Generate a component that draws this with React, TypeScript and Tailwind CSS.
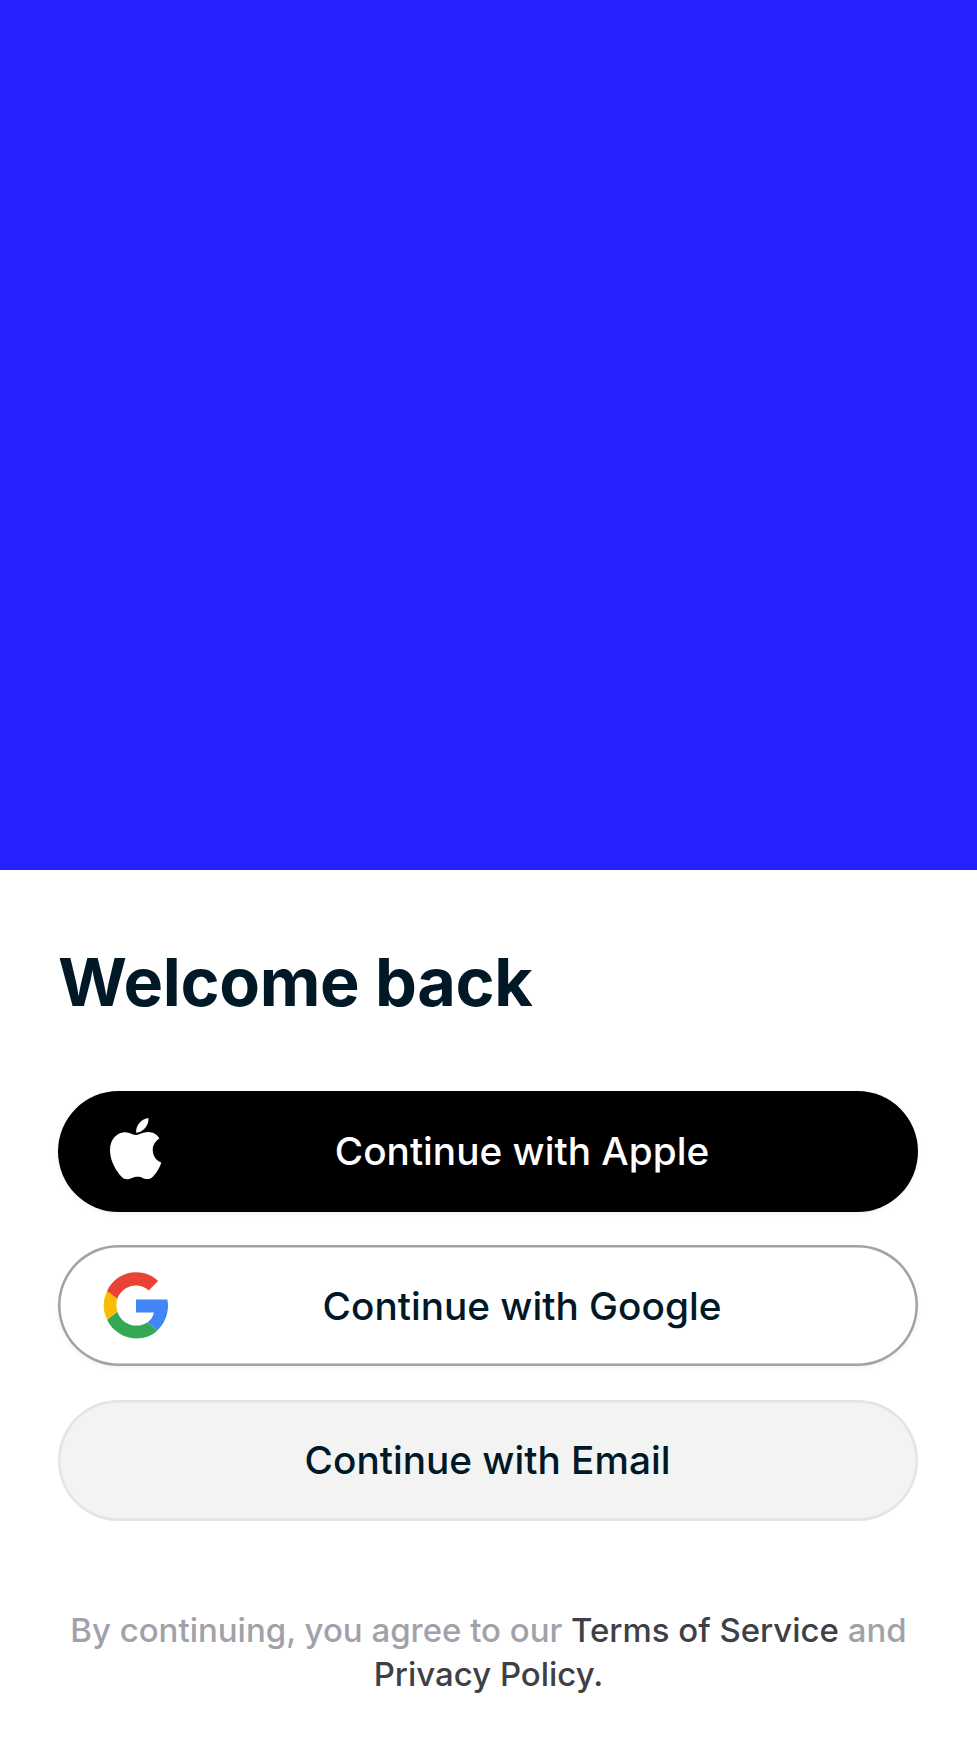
import type { ReactNode } from "react";

function AppleLogo() {
  return (
    <svg className="mb-[5px] h-[61.5px] w-[52px]" viewBox="0 0 52 61.5" fill="#fff" aria-hidden="true">
      <path d="M38.400 0C38.900 3.700 37.300 7.400 35.100 10.100C32.800 12.900 29.500 14.900 26.200 14.700C25.700 11.100 27.300 7.500 29.400 5C31.700 2.200 35.600 .2 38.400 0Z" />
      <path d="M49.400 20.400C49.100 20.600 42.700 24.200 42.700 32C42.700 41.100 50.700 44.400 51.300 44.600C51.200 44.900 50 49.100 47 53.500C44.400 57.300 41.700 61.100 37.500 61.100C33.300 61.100 32.300 58.700 27.400 58.700C22.700 58.700 21 61.200 17 61.200C13.100 61.200 10.300 57.700 7.200 53.200C3.500 48 0 39.900 0 32.200C0 20 8 14.200 15.300 14.200C19.700 14.200 23.400 17.100 26.200 17.100C28.800 17.100 32.900 14 37.900 14C39.800 14 45.800 14.200 49.400 20.400Z" />
    </svg>
  );
}

function GoogleLogo() {
  return (
    <svg className="h-[67px] w-[65px]" viewBox="0 0 65 67" aria-hidden="true">
      <path fill="#4285f4" d="M64.300 27.500H33v13h17.900c-.8 4.200-3.100 7.600-6.600 10l10 8C60.800 52.500 65 43.700 65 33.500c0-2.100-.3-4.200-.7-6z" />
      <path fill="#34a853" d="M44.300 50.500c-2.900 1.900-6.700 3.100-11.300 3.100-8.700 0-16-5.900-18.600-13.900L4 47.800C9.400 59 20.900 66.500 33 66.500c9 0 16.300-2.900 21.300-8z" />
      <path fill="#fbbc05" d="M14.400 39.700a20.400 20.400 0 0 1 0-12.900L4 18.900a33.500 33.500 0 0 0 0 28.900z" />
      <path fill="#ea4335" d="M33 13.400c4.900 0 9.200 1.700 12.700 5l9.400-9.400C49.400 3.500 42 .2 33 .2 20.400.2 9.300 7.600 4 18.900l10.400 7.900C17 18.900 24.300 13.400 33 13.400z" />
    </svg>
  );
}

function AuthButton({ icon, tone, children }: { icon?: ReactNode; tone: string; children: ReactNode }) {
  return (
    <button type="button" className={`flex h-[121px] w-full items-center rounded-full pr-[43px] pl-[42px] text-[38.750px] leading-[58px] font-medium ${tone}`}>
      {icon && <span className="flex w-[69px] shrink-0 justify-center pl-[2px]">{icon}</span>}
      <span className="flex-1 text-center">{children}</span>
    </button>
  );
}

export default function App() {
  return (
    <main className="flex h-[1763px] w-[977px] flex-col bg-white font-['Inter',sans-serif]">
      <div className="h-[870.300px] shrink-0 bg-[#2721ff]" />
      <section className="flex flex-col px-[58px] pt-[72px]">
        <h1 className="text-[66.500px] leading-[80px] font-bold tracking-[-0.3px] text-[#011827]">Welcome back</h1>
        <div className="mt-[68.700px] flex w-[860px] flex-col gap-[33.500px]">
          <AuthButton icon={<AppleLogo />} tone="bg-black text-white shadow-[0_2px_5px_rgba(0,0,0,0.05)]">
            Continue with Apple
          </AuthButton>
          <AuthButton icon={<GoogleLogo />} tone="bg-white text-[#011827] shadow-[inset_0_0_0_2.5px_#a1a1aa,0_2px_5px_rgba(0,0,0,0.05)]">
            Continue with Google
          </AuthButton>
          <AuthButton tone="bg-[#f3f3f3] text-[#011827] shadow-[inset_0_0_0_2.5px_#e4e4e7]">Continue with Email</AuthButton>
        </div>
        <p className="mt-[87.500px] text-center text-[32.960px] leading-[44px] font-medium text-[#a1a1aa]">
          By continuing, you agree to our <a className="text-[#3f3f46]">Terms of Service</a> and
          <br />
          <a className="text-[#3f3f46]">Privacy Policy.</a>
        </p>
      </section>
    </main>
  );
}
